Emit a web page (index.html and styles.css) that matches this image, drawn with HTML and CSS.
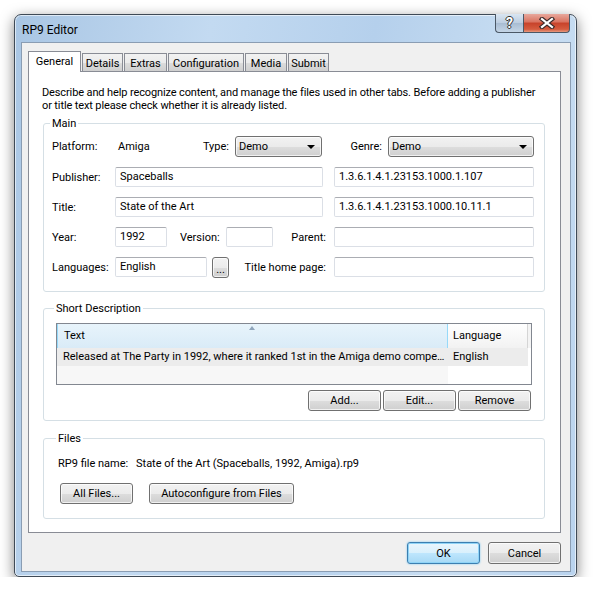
FILE: index.html
```html
<!DOCTYPE html>
<html lang="en">
<head>
    <meta charset="UTF-8">
    <title>RP9 Editor</title>
    <link rel="stylesheet" href="styles.css">
</head>
<body>
    <div class="window">
        <div class="titlebar">
            <span class="title">RP9 Editor</span>
            <div class="caption-buttons">
                <span class="cap-btn help">?</span>
                <span class="cap-btn close">
                    <svg width="16" height="12" viewBox="0 0 16 12">
                        <path d="M3 2 L13 10 M13 2 L3 10" stroke="#3a2a2a" stroke-width="4.4" stroke-linecap="square"/>
                        <path d="M3 2 L13 10 M13 2 L3 10" stroke="#ffffff" stroke-width="2.2" stroke-linecap="square"/>
                    </svg>
                </span>
            </div>
        </div>

        <div class="client">
            <div class="tabs">
                <span class="tab active" style="width:53px">General</span>
                <span class="tab" style="width:41px">Details</span>
                <span class="tab" style="width:43px">Extras</span>
                <span class="tab" style="width:76px">Configuration</span>
                <span class="tab" style="width:42px">Media</span>
                <span class="tab" style="width:41px">Submit</span>
            </div>

            <div class="tab-panel">
                <p class="intro">Describe and help recognize content, and manage the files used in other tabs. Before adding a publisher or title text please check whether it is already listed.</p>

                <fieldset class="group group-main">
                    <legend>Main</legend>
                    <div class="row">
                        <span class="label">Platform:</span>
                        <div class="middle">
                            <span class="value">Amiga</span>
                            <span class="inline-label">Type:</span>
                            <div class="combo combo-type"><span>Demo</span><i class="arrow"></i></div>
                        </div>
                        <div class="right">
                            <span class="inline-label">Genre:</span>
                            <div class="combo combo-genre"><span>Demo</span><i class="arrow"></i></div>
                        </div>
                    </div>
                    <div class="row">
                        <span class="label">Publisher:</span>
                        <div class="textbox wide">Spaceballs</div>
                        <div class="textbox side">1.3.6.1.4.1.23153.1000.1.107</div>
                    </div>
                    <div class="row">
                        <span class="label">Title:</span>
                        <div class="textbox wide">State of the Art</div>
                        <div class="textbox side">1.3.6.1.4.1.23153.1000.10.11.1</div>
                    </div>
                    <div class="row">
                        <span class="label">Year:</span>
                        <div class="textbox year">1992</div>
                        <span class="version-label">Version:</span>
                        <div class="textbox version"></div>
                        <span class="right-label">Parent:</span>
                        <div class="textbox side"></div>
                    </div>
                    <div class="row row-last">
                        <span class="label">Languages:</span>
                        <div class="textbox languages">English</div>
                        <span class="button dots">...</span>
                        <span class="right-label">Title home page:</span>
                        <div class="textbox side"></div>
                    </div>
                </fieldset>

                <fieldset class="group group-desc">
                    <legend>Short Description</legend>
                    <div class="listview">
                        <div class="lv-header">
                            <span class="lv-col col-text sorted">Text<i class="sort-arrow"></i></span>
                            <span class="lv-col col-lang">Language</span>
                        </div>
                        <div class="lv-row">
                            <span class="lv-cell col-text">Released at The Party in 1992, where it ranked 1st in the Amiga demo compe…</span>
                            <span class="lv-cell col-lang">English</span>
                        </div>
                        <div class="lv-fill">
                            <span class="col-text sorted-fill"></span>
                            <span class="col-lang"></span>
                        </div>
                    </div>
                    <div class="list-buttons">
                        <span class="button">Add...</span>
                        <span class="button">Edit...</span>
                        <span class="button">Remove</span>
                    </div>
                </fieldset>

                <fieldset class="group group-files">
                    <legend>Files</legend>
                    <div class="file-name">
                        <span class="file-label">RP9 file name:</span>
                        <span>State of the Art (Spaceballs, 1992, Amiga).rp9</span>
                    </div>
                    <div class="file-buttons">
                        <span class="button all-files">All Files...</span>
                        <span class="button autoconf">Autoconfigure from Files</span>
                    </div>
                </fieldset>
            </div>

            <div class="dialog-buttons">
                <span class="button default">OK</span>
                <span class="button">Cancel</span>
            </div>
        </div>
    </div>
</body>
</html>
```

FILE: styles.css
```css
body {
    margin: 0;
    background: #ffffff;
    font-family: Roboto, "Noto Sans", sans-serif;
    font-size: 11px;
    color: #000000;
}
.window {
    margin: 14px 0 0 14px;
    width: 563px;
    height: 563px;
    box-sizing: border-box;
    border: 1px solid #3f4a56;
    border-radius: 7px 7px 5px 5px;
    padding: 0 5px 5px 6px;
    background: linear-gradient(100deg, #a9c6e4 0%, #c3daf1 30%, #b5d0ec 55%, #c9def2 80%, #b9d3ee 100%);
    box-shadow: 0 4px 14px rgba(0, 0, 0, 0.5), inset 0 0 0 1px rgba(255, 255, 255, 0.6);
}
.titlebar {
    height: 27px;
    display: flex;
    justify-content: space-between;
    align-items: flex-start;
}
.title {
    padding-left: 1px;
    margin-top: 8px;
    font-size: 12px;
    line-height: 15px;
}
.caption-buttons {
    display: flex;
    margin-top: -1px;
    margin-right: 1px;
}
.cap-btn {
    height: 19px;
    box-sizing: border-box;
    display: flex;
    align-items: center;
    justify-content: center;
    border: 1px solid #4b5866;
    border-top: none;
}
.help {
    width: 28px;
    border-radius: 0 0 0 4px;
    border-right: none;
    background: linear-gradient(#d9e5f1, #bccde0 50%, #a8bcd2 51%, #c4d5e6);
    color: #ffffff;
    font-weight: bold;
    font-size: 14px;
    text-shadow: -1px 0 #333, 1px 0 #333, 0 -1px #333, 0 1px #333;
}
.close {
    width: 47px;
    border-radius: 0 0 4px 0;
    background: linear-gradient(#e8a89c, #d9725f 45%, #c7422a 50%, #d55c3f 85%, #e69a80);
}
.client {
    width: 550px;
    height: 530px;
    box-sizing: border-box;
    border: 1px solid #8a9db3;
    background: #f0f0f0;
    padding: 8px 0 0 6px;
}
.tabs {
    display: flex;
    align-items: flex-end;
    height: 20px;
}
.tab {
    height: 18px;
    box-sizing: border-box;
    border: 1px solid #898c95;
    border-bottom: none;
    margin-right: 1px;
    background: linear-gradient(#f2f2f2, #ebebeb 50%, #dddddd 51%, #cfcfcf);
    text-align: center;
    line-height: 19px;
}
.tab.active {
    height: 21px;
    margin-bottom: -1px;
    background: #ffffff;
    position: relative;
    line-height: 19px;
}
.tab-panel {
    width: 533px;
    height: 462px;
    box-sizing: border-box;
    border: 1px solid #898c95;
    background: #ffffff;
    padding: 14px 15px 0 14px;
}
.intro {
    margin: 0 0 5px -1px;
    line-height: 13px;
    letter-spacing: -0.12px;
}
.group {
    margin: 0;
    border: 1px solid #d5dfe5;
    border-radius: 3px;
    padding: 6px 10px 14px 8px;
    min-width: 0;
}
.group legend {
    padding: 0 2px;
    margin-left: -2px;
    line-height: 13px;
}
.row {
    display: flex;
    align-items: center;
    height: 20px;
    margin-bottom: 10px;
}
.row:first-of-type {
    height: 21px;
}
.row.row-last {
    margin-bottom: 0;
    margin-top: 1px;
}
.label {
    width: 63px;
    flex: none;
}
.middle {
    width: 208px;
    display: flex;
    align-items: center;
}
.value {
    flex: 1;
    padding-left: 3px;
}
.inline-label {
    margin-right: 6px;
}
.right {
    width: 200px;
    margin-left: 11px;
    display: flex;
    align-items: center;
    justify-content: flex-end;
}
.combo {
    height: 21px;
    box-sizing: border-box;
    border: 1px solid #707070;
    border-radius: 3px;
    background: linear-gradient(#f2f2f2, #ebebeb 50%, #dddddd 51%, #cfcfcf);
    box-shadow: inset 0 0 0 1px rgba(255, 255, 255, 0.7);
    display: flex;
    align-items: center;
    justify-content: space-between;
    padding: 0 6px 0 3px;
}
.combo-type {
    width: 87px;
    margin-right: 1px;
}
.combo-genre {
    width: 146px;
}
.arrow {
    width: 0;
    height: 0;
    border-left: 4px solid transparent;
    border-right: 4px solid transparent;
    border-top: 4px solid #000000;
}
.textbox {
    height: 20px;
    box-sizing: border-box;
    border: 1px solid #dbdfe6;
    border-top-color: #abadb3;
    border-radius: 2px;
    padding: 0 4px;
    line-height: 18px;
    background: #ffffff;
    flex: none;
}
.wide {
    width: 208px;
}
.side {
    width: 200px;
    margin-left: 11px;
}
.year {
    width: 52px;
}
.version-label {
    width: 46px;
    margin-left: 13px;
}
.version {
    width: 47px;
}
.languages {
    width: 92px;
}
.right-label {
    flex: 1;
    text-align: right;
    padding-right: 8px;
    white-space: nowrap;
}
.right-label + .side {
    margin-left: 0;
}
.button {
    display: inline-flex;
    align-items: center;
    justify-content: center;
    height: 21px;
    box-sizing: border-box;
    border: 1px solid #707070;
    border-radius: 3px;
    background: linear-gradient(#f2f2f2, #ebebeb 50%, #dddddd 51%, #cfcfcf);
    box-shadow: inset 0 0 0 1px rgba(255, 255, 255, 0.7);
    width: 73px;
}
.button.dots {
    width: 17px;
    margin-left: 5px;
    align-items: flex-end;
    padding-bottom: 2px;
    line-height: 10px;
}
.group-desc {
    margin-top: 10px;
    padding: 8px 12px 9px 12px;
}
.listview {
    height: 62px;
    box-sizing: border-box;
    border: 1px solid #828790;
    background: #ffffff;
    display: flex;
    flex-direction: column;
}
.lv-header {
    display: flex;
    height: 24px;
    flex: none;
    background: #f4f4f4;
}
.lv-col {
    line-height: 24px;
}
.col-text, .col-lang {
    box-sizing: border-box;
    flex: none;
}
.col-text {
    width: 391px;
    padding-left: 6px;
}
.col-lang {
    width: 80px;
    padding-left: 5px;
}
.lv-header .col-text {
    background: linear-gradient(#e8f4fb, #d9ebf7);
    border-left: 1px solid #96d9f9;
    border-right: 1px solid #96d9f9;
    position: relative;
}
.lv-header .col-lang {
    background: linear-gradient(#ffffff, #f2f2f2);
    border-right: 1px solid #d5d5d5;
}
.sort-arrow {
    position: absolute;
    top: 2px;
    left: 191px;
    width: 0;
    height: 0;
    border-left: 3px solid transparent;
    border-right: 3px solid transparent;
    border-bottom: 4px solid #8fa5bb;
}
.lv-row {
    display: flex;
    height: 18px;
    flex: none;
    line-height: 18px;
}
.lv-cell {
    background: #ececec;
    white-space: nowrap;
    overflow: hidden;
}
.lv-fill {
    display: flex;
    flex: 1;
}
.sorted-fill {
    background: #f7f7f7;
}
.list-buttons {
    display: flex;
    justify-content: flex-end;
    gap: 2px;
    margin-top: 5px;
    padding-right: 1px;
}
.group-files {
    margin-top: 11px;
    padding: 12px 12px 14px 14px;
}
.file-name {
    display: flex;
    line-height: 13px;
}
.file-label {
    width: 78px;
}
.file-buttons {
    display: flex;
    margin-top: 13px;
    margin-left: 2px;
}
.all-files {
    width: 73px;
}
.autoconf {
    width: 145px;
    margin-left: 16px;
}
.dialog-buttons {
    display: flex;
    justify-content: flex-end;
    gap: 8px;
    width: 533px;
    margin-top: 9px;
}
.dialog-buttons .button {
    height: 22px;
}
.button.default {
    border-color: #3c7fb1;
    background: linear-gradient(#eaf6fd, #d9f0fc 50%, #bee6fd 51%, #a7d9f5);
    box-shadow: inset 0 0 0 1px #8fd4f7, 0 0 2px #6cc3f0;
}
```
